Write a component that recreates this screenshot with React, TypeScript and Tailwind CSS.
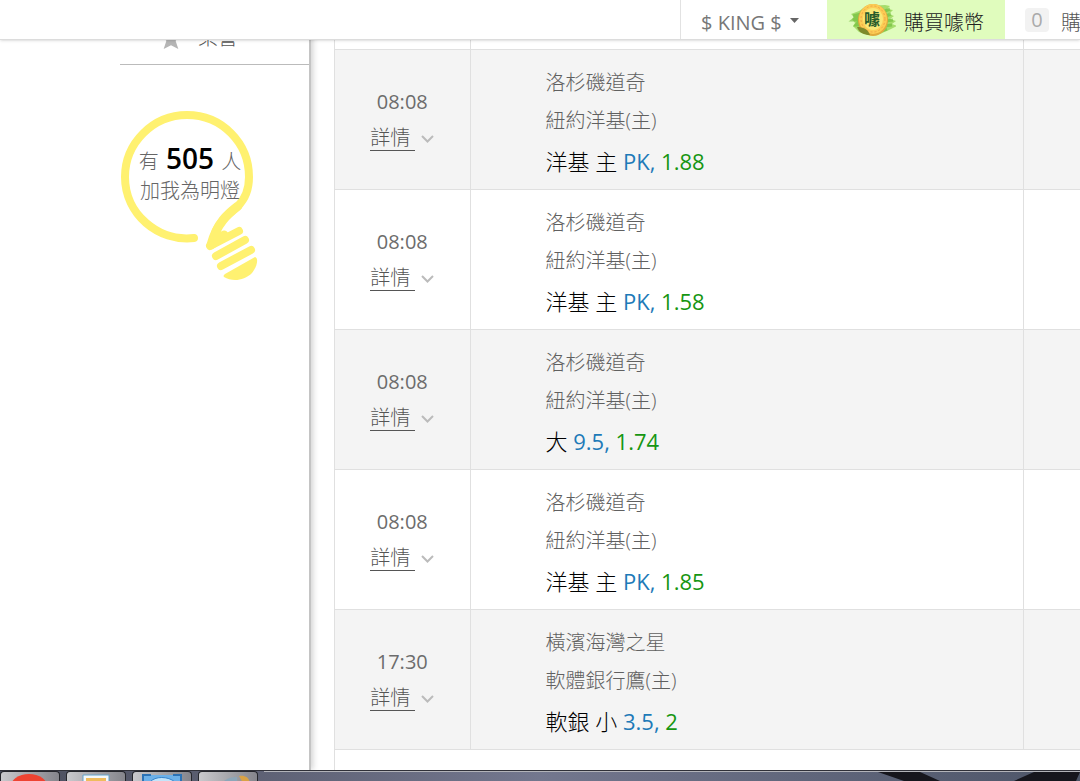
interface Pick {
  time: string;
  away: string;
  home: string;
  team: string;
  line: string;
  odds: string;
}

const picks: Pick[] = [
  { time: "08:08", away: "洛杉磯道奇", home: "紐約洋基(主)", team: "洋基 主", line: "PK,", odds: "1.88" },
  { time: "08:08", away: "洛杉磯道奇", home: "紐約洋基(主)", team: "洋基 主", line: "PK,", odds: "1.58" },
  { time: "08:08", away: "洛杉磯道奇", home: "紐約洋基(主)", team: "大", line: "9.5,", odds: "1.74" },
  { time: "08:08", away: "洛杉磯道奇", home: "紐約洋基(主)", team: "洋基 主", line: "PK,", odds: "1.85" },
  { time: "17:30", away: "橫濱海灣之星", home: "軟體銀行鷹(主)", team: "軟銀 小", line: "3.5,", odds: "2" },
];

function CoinIcon() {
  return (
    <svg width="48" height="38" viewBox="0 0 48 38" aria-hidden="true">
      <path
        d="M3 13l8-3 8-5 18-1 5 1-3 3 6 1-4 4 5 2-4 3 6 2-4 3 5 2-8 4-9 4-12 1-9-3-6-6 2-3-3-4 2-2z"
        fill="#a5dd6c"
      />
      <path d="M5 15l8-2-8 6 7 0-4 5 6 0M37 10l5-2M38 15l5-2M38 20l7-1M36 25l8-1M33 30l6-2" stroke="#6cba38" strokeWidth="3" fill="none" opacity="0.6" />
      <ellipse cx="25" cy="19" rx="15" ry="16" fill="#e0aa3c" />
      <ellipse cx="25" cy="18" rx="14" ry="15" fill="#fccd55" />
      <ellipse cx="25" cy="18" rx="12" ry="13" fill="none" stroke="#f0a648" strokeWidth="1" strokeDasharray="2 2" />
      <ellipse cx="25" cy="18" rx="10" ry="11" fill="#f8e878" />
      <path d="M9 26c6 0 11 2 13 8-6 0-11-2-13-8z" fill="#7d8a2c" />
      <text x="24" y="24" textAnchor="middle" fontSize="16" fontWeight="700" fill="#285c2c" fontFamily="'Noto Sans CJK TC', sans-serif">
        噱
      </text>
    </svg>
  );
}

function LightBulb() {
  return (
    <svg width="160" height="190" viewBox="0 0 160 190" className="absolute inset-0" aria-hidden="true">
      <g fill="none" stroke="#fff170" strokeLinecap="round" strokeLinejoin="round">
        <path
          d="M84 138C48 142 15 114 15 77C15 43 43 15 77 15C112 15 139 43 139 77C139 89 136 98 128 106C119 114 108 122 104 136"
          strokeWidth="8"
        />
        <path d="M128 106C119 113 107 122 101 145L114 135" strokeWidth="9" />
        <path d="M100 146L129 131M106 156L135 140M111 166L141 150" strokeWidth="8" />
      </g>
      <path d="M115 174L145 157C149 158 147 167 142 173C134 181 122 182 114 177C113 176 114 175 115 174Z" fill="#fff170" />
    </svg>
  );
}

function TaskButton({ children }: { children: React.ReactNode }) {
  return (
    <div className="flex w-[60px] justify-center overflow-hidden rounded-t-sm border-x border-t border-[#25262c] bg-linear-to-r from-[#c9c9cd] to-[#85858c]">
      {children}
    </div>
  );
}

function Taskbar() {
  return (
    <footer className="z-10 flex h-[11px] shrink-0 gap-1.5 overflow-hidden border-t border-[#2f3038] bg-linear-to-r from-[#4b4e5e] via-[#73778e] to-[#4d5568]">
      <TaskButton>
        <svg width="56" height="10" viewBox="0 0 56 10" aria-hidden="true">
          <ellipse cx="27" cy="16" rx="19" ry="14" fill="#ee4332" />
        </svg>
      </TaskButton>
      <TaskButton>
        <svg width="32" height="10" viewBox="0 0 32 10" aria-hidden="true">
          <path d="M3 3h26v10H3z" fill="#f3f8fb" stroke="#65a3ca" />
          <path d="M6 6h20v6H6z" fill="#efbc5d" />
        </svg>
      </TaskButton>
      <TaskButton>
        <svg width="42" height="10" viewBox="0 0 42 10" aria-hidden="true">
          <path d="M2 3h38v9H2z" fill="#6cb0e8" />
          <path d="M2 9V3h8M40 9V3h-8" fill="none" stroke="#2c72b5" strokeWidth="2" />
          <path d="M9 10c5-6 18-6 25 0" fill="#c3e4fa" stroke="#3584cd" />
        </svg>
      </TaskButton>
      <TaskButton>
        <svg width="50" height="10" viewBox="0 0 50 10" aria-hidden="true">
          <path d="M20 10c4-4 9-5 14-5v5z" fill="#8ca6b9" />
          <path d="M36 4c8-1 10 3 11 7h-7z" fill="#d9a245" />
        </svg>
      </TaskButton>
      <svg className="h-full flex-1" viewBox="0 0 816 10" preserveAspectRatio="none" aria-hidden="true">
        <path d="M0 0h816" stroke="#b2b3b9" strokeWidth="2" />
        <path d="M614 1h42l20 9h-36zM770 1h46l-4 9h-62z" fill="#16161d" />
      </svg>
    </footer>
  );
}

function Header() {
  return (
    <header className="absolute inset-x-0 top-0 z-20 flex h-10 justify-end overflow-hidden border-b border-[#dcdcdc] bg-white text-xl text-[#777] shadow-sm">
      <button className="flex w-[147px] items-center gap-2 border-l border-[#e2e2e2] pt-1.5 pl-5 whitespace-nowrap">
        $ KING $
        <svg width="9" height="5" viewBox="0 0 9 5" className="mb-1" aria-hidden="true">
          <path d="M0 0h9L4.5 5z" fill="#666" />
        </svg>
      </button>
      <a href="#buy" className="flex w-[178px] items-center gap-2 bg-[#e0fcbd] pl-[21px] whitespace-nowrap text-[#222]">
        <CoinIcon />
        <span className="pt-1.5 font-light">購買噱幣</span>
      </a>
      <a href="#cart" className="flex w-[75px] items-center gap-3 overflow-hidden pl-5 whitespace-nowrap">
        <span className="flex h-6 w-6 shrink-0 items-center justify-center rounded bg-[#f2f2f2] text-[#aaa]">0</span>
        <span className="pt-1.5 font-light text-[#555]">購</span>
      </a>
    </header>
  );
}

function Sidebar() {
  return (
    <aside className="z-10 flex w-[311px] shrink-0 flex-col border-r-2 border-[#c4c4c4] bg-white pl-[120px] shadow-[2px_0_6px_rgba(0,0,0,0.18)]">
      <a href="#honor" className="flex h-[65px] items-center gap-4 border-b border-[#bbb] pt-3 pl-10 text-xl font-light text-[#555]">
        <svg width="22" height="22" viewBox="0 0 24 24" fill="#b5b5b5" aria-hidden="true">
          <path d="M12 3l3 7h7l-5 5 3 9-8-4-8 4 3-9-5-5h7z" />
        </svg>
        榮譽
      </a>
      <div className="relative mt-[35px] -ml-[10px] h-[190px] w-40 text-center text-xl font-light text-[#666]">
        <LightBulb />
        <p className="relative pt-[42px] leading-8 whitespace-nowrap">
          有 <strong className="mx-0.5 text-[28px] leading-8 font-semibold text-black">505</strong> 人
        </p>
        <p className="relative leading-[26px] whitespace-nowrap">加我為明燈</p>
      </div>
    </aside>
  );
}

function PickRow({ pick }: { pick: Pick }) {
  return (
    <tr className="border-b border-[#e0e0e0] odd:bg-white even:bg-[#f4f4f4]">
      <td className="w-[135px] border-r border-[#e0e0e0] pt-0.5 text-center align-middle text-xl leading-9 text-[#6c6c6c]">
        <div>{pick.time}</div>
        <button className="inline-flex items-center gap-1.5 font-light text-[#555]">
          <span className="border-b border-[#555] pr-[5px] leading-6">詳情</span>
          <svg width="13" height="8" viewBox="0 0 13 8" fill="none" stroke="#bbb" strokeWidth="2" aria-hidden="true">
            <path d="M1 1l5.500 5.500L12 1" />
          </svg>
        </button>
      </td>
      <td className="border-r border-[#e0e0e0] pt-3.5 pb-[7px] pl-[75px] text-xl leading-[38px] font-light text-[#606060]">
        <p>{pick.away}</p>
        <p>{pick.home}</p>
        <p className="text-[22px] leading-[42px] text-black">
          {pick.team} <span className="font-normal text-[#1d7ab8]">{pick.line}</span>{" "}
          <span className="font-normal text-[#169612]">{pick.odds}</span>
        </p>
      </td>
      <td className="w-[57px]" />
    </tr>
  );
}

export default function App() {
  return (
    <div className="relative flex h-screen flex-col overflow-hidden bg-white font-['Open_Sans','Noto_Sans_CJK_TC',sans-serif] font-normal">
      <Header />
      <main className="flex min-h-0 flex-1 overflow-hidden">
        <Sidebar />
        <section className="ml-[23px] flex-1 border-l border-[#e0e0e0]">
          <table className="w-full border-collapse">
            <tbody>
              <tr className="h-[49px] border-b border-[#e0e0e0]">
                <td className="border-r border-[#e0e0e0]" />
                <td className="border-r border-[#e0e0e0]" />
                <td />
              </tr>
              {picks.map((pick, i) => (
                <PickRow key={i} pick={pick} />
              ))}
            </tbody>
          </table>
        </section>
      </main>
      <Taskbar />
    </div>
  );
}
